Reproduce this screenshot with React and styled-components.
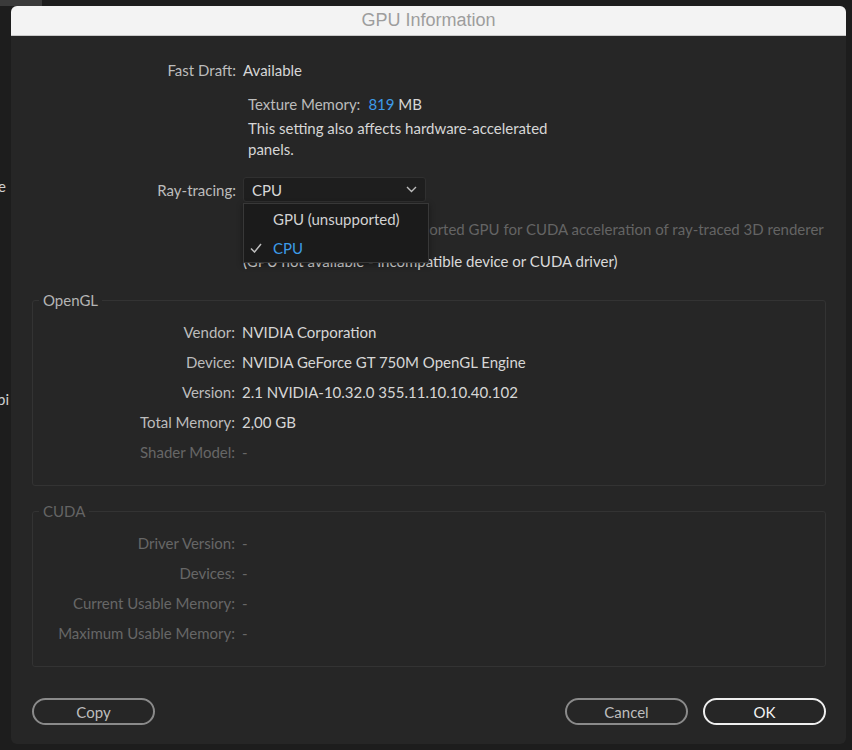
import React from "react";
import styled, { createGlobalStyle } from "styled-components";

const GlobalStyle = createGlobalStyle`
  html, body {
    margin: 0;
    padding: 0;
    background: #1c1c1c;
  }
  body {
    font-family: Lato, "Open Sans", sans-serif;
  }
`;

const Desktop = styled.div`
  position: relative;
  width: 852px;
  height: 750px;
  padding: 6px 6px 6px 11px;
  box-sizing: border-box;
  background: #1d1d1d;
  overflow: hidden;
`;

const BehindTab = styled.div`
  position: absolute;
  left: 0;
  top: 0;
  width: 42px;
  height: 6px;
  background: #3a3a3a;
`;

const BehindText = styled.span`
  position: absolute;
  left: ${(p) => p.$left}px;
  top: ${(p) => p.$top}px;
  color: #cfcfcf;
  font-size: 15px;
`;

const Dialog = styled.div`
  position: relative;
  width: 835px;
  height: 738px;
  background: #262626;
  border-radius: 6px;
  overflow: hidden;
  display: flex;
  flex-direction: column;
`;

const TitleBar = styled.div`
  height: 29px;
  flex: none;
  background: #f3f3f3;
  border-bottom: 1px solid #c9c9c9;
  display: flex;
  align-items: center;
  justify-content: center;
  font-family: "Liberation Sans", Arial, sans-serif;
  font-size: 18px;
  color: #9d9d9d;
`;

const Body = styled.div`
  flex: 1;
  display: flex;
  flex-direction: column;
  padding: 19px 20px 19px 21px;
  font-size: 15px;
`;

const Row = styled.div`
  display: grid;
  grid-template-columns: ${(p) => p.$labelWidth}px 1fr;
  column-gap: 7px;
  align-items: center;
  height: ${(p) => p.$height || 30}px;
  color: ${(p) => (p.$dim ? "#676767" : "#d6d6d6")};
`;

const Label = styled.span`
  text-align: right;
  color: ${(p) => (p.$dim ? "#676767" : "#bcbcbc")};
  white-space: nowrap;
`;

const Value = styled.span`
  white-space: nowrap;
`;

const Indented = styled.div`
  margin-left: ${(p) => p.$left}px;
  margin-top: ${(p) => p.$top || 0}px;
  line-height: ${(p) => p.$lineHeight || 21}px;
  color: ${(p) => p.$color || "#d6d6d6"};
  white-space: nowrap;
`;

const Label2 = styled.span`
  color: #bcbcbc;
  margin-right: 8px;
`;

const Blue = styled.span`
  color: #3d9be9;
`;

const SelectWrap = styled.div`
  position: relative;
  width: 183px;
  z-index: 2;
`;

const SelectBox = styled.div`
  height: 25px;
  box-sizing: border-box;
  border: 1px solid #303030;
  border-radius: 3px;
  background: #1e1e1e;
  display: flex;
  align-items: center;
  justify-content: space-between;
  padding: 0 8px 0 8px;
  color: #d8d8d8;
`;

const Menu = styled.div`
  position: absolute;
  left: 0;
  top: 26px;
  width: 186px;
  height: 60px;
  box-sizing: border-box;
  background: #1b1b1b;
  border: 1px solid #383838;
  box-shadow: 0 2px 6px rgba(0, 0, 0, 0.4);
`;

const MenuItem = styled.div`
  height: 29px;
  display: flex;
  align-items: center;
  padding-left: 6px;
  color: ${(p) => (p.$active ? "#3d9be9" : "#d2d2d2")};
`;

const Check = styled.span`
  width: 23px;
  display: inline-flex;
  align-items: center;
`;

const Group = styled.fieldset`
  margin: ${(p) => p.$top}px 0 0 0;
  padding: 7px 0 ${(p) => p.$bottom}px 0;
  border: 1px solid #333333;
  border-radius: 3px;
  min-width: 0;
`;

const Legend = styled.legend`
  margin-left: 6px;
  padding: 0 4px;
  line-height: 20px;
  color: ${(p) => (p.$dim ? "#646464" : "#b4b4b4")};
`;

const Footer = styled.div`
  margin-top: auto;
  display: flex;
  align-items: center;
  gap: 15px;
`;

const Pill = styled.button`
  width: 123px;
  height: 27px;
  border-radius: 14px;
  background: transparent;
  border: 2px solid ${(p) => (p.$primary ? "#eeeeee" : "#8a8a8a")};
  color: ${(p) => (p.$primary ? "#f2f2f2" : "#bdbdbd")};
  font-family: Lato, "Open Sans", sans-serif;
  font-size: 15px;
  padding: 0;
  margin-left: ${(p) => (p.$push ? "auto" : "0")};
`;

const Chevron = () => (
  <svg width="11" height="7" viewBox="0 0 11 7">
    <path d="M1 1l4.5 4.5L10 1" fill="none" stroke="#bdbdbd" strokeWidth="1.4" />
  </svg>
);

const Tick = () => (
  <svg width="12" height="10" viewBox="0 0 12 10">
    <path d="M1 5.5l3.5 3.5L11 1" fill="none" stroke="#bdbdbd" strokeWidth="1.5" />
  </svg>
);

const openGl = [
  ["Vendor:", "NVIDIA Corporation"],
  ["Device:", "NVIDIA GeForce GT 750M OpenGL Engine"],
  ["Version:", "2.1 NVIDIA-10.32.0 355.11.10.10.40.102"],
  ["Total Memory:", "2,00 GB"],
  ["Shader Model:", "-", true],
];

const cuda = [
  ["Driver Version:", "-"],
  ["Devices:", "-"],
  ["Current Usable Memory:", "-"],
  ["Maximum Usable Memory:", "-"],
];

export default function App() {
  return (
    <>
      <GlobalStyle />
      <Desktop>
        <BehindTab />
        <BehindText $left={-2} $top={177}>e</BehindText>
        <BehindText $left={-3} $top={390}>pi</BehindText>
        <Dialog>
          <TitleBar>GPU Information</TitleBar>
          <Body>
            <Row $labelWidth={204}>
              <Label>Fast Draft:</Label>
              <Value>Available</Value>
            </Row>
            <Indented $left={216} $top={9}>
              <Label2>Texture Memory:</Label2>
              <Blue>819</Blue> MB
            </Indented>
            <Indented $left={216} $top={3}>
              This setting also affects hardware-accelerated
              <br />
              panels.
            </Indented>
            <Row $labelWidth={204} $height={25} style={{ marginTop: 17 }}>
              <Label>Ray-tracing:</Label>
              <SelectWrap>
                <SelectBox>
                  <span>CPU</span>
                  <Chevron />
                </SelectBox>
                <Menu>
                  <MenuItem>
                    <Check />
                    GPU (unsupported)
                  </MenuItem>
                  <MenuItem $active>
                    <Check>
                      <Tick />
                    </Check>
                    CPU
                  </MenuItem>
                </Menu>
              </SelectWrap>
            </Row>
            <Indented $left={211} $top={17} $lineHeight={20} $color="#646464">
              Ray-tracing: Requires a supported GPU for CUDA acceleration of ray-traced 3D renderer
            </Indented>
            <Indented $left={211} $top={12} $lineHeight={20} $color="#dadada">
              (GPU not available - incompatible device or CUDA driver)
            </Indented>
            <Group $top={19} $bottom={18}>
              <Legend>OpenGL</Legend>
              {openGl.map(([k, v, dim]) => (
                <Row key={k} $labelWidth={202} $dim={dim}>
                  <Label $dim={dim}>{k}</Label>
                  <Value>{v}</Value>
                </Row>
              ))}
            </Group>
            <Group $top={15} $bottom={18}>
              <Legend $dim>CUDA</Legend>
              {cuda.map(([k, v]) => (
                <Row key={k} $labelWidth={202} $dim>
                  <Label $dim>{k}</Label>
                  <Value>{v}</Value>
                </Row>
              ))}
            </Group>
            <Footer>
              <Pill>Copy</Pill>
              <Pill $push>Cancel</Pill>
              <Pill $primary>OK</Pill>
            </Footer>
          </Body>
        </Dialog>
      </Desktop>
    </>
  );
}
